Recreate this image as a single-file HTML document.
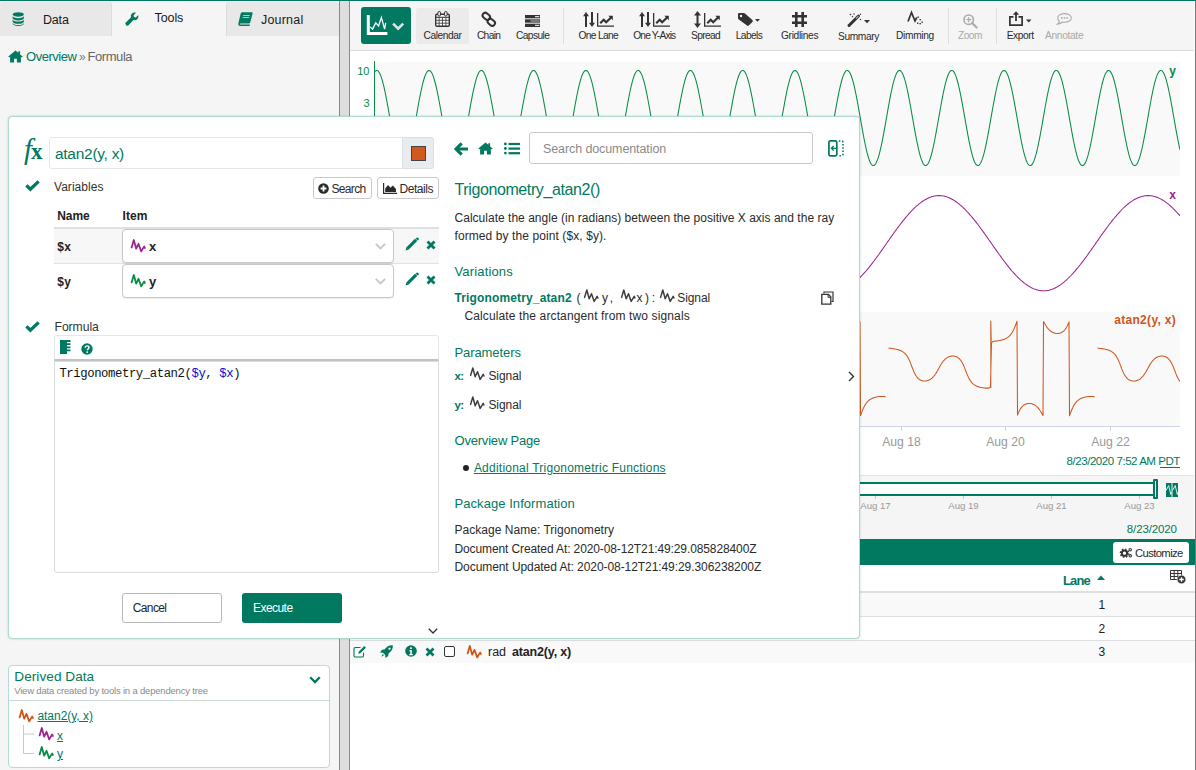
<!DOCTYPE html>
<html lang="en">
<head>
<meta charset="utf-8">
<title>Formula - atan2(y, x)</title>
<style>
*{box-sizing:border-box;margin:0;padding:0}
html,body{width:1196px;height:770px;overflow:hidden;background:#fff}
body{font-family:"Liberation Sans",sans-serif;font-size:12px;color:#2a2a2a;position:relative}
.abs{position:absolute}
.t{position:absolute;white-space:nowrap;line-height:1}
.teal{color:#007960}
svg{position:absolute;overflow:visible}
#topline{left:0;top:0;width:1196px;height:1px;background:#007960}
#left{left:0;top:1px;width:339px;height:769px;background:#f5f5f5}
.tab{position:absolute;top:2px;height:34px;background:#e8e8e8;border-right:1px solid #dadde0;border-radius:3px 3px 0 0}
.tab.on{background:#f5f5f5;border:none}
.tablabel{font-size:13px;color:#1a1a1a;top:12px}
#split{left:339px;top:1px;width:11px;height:769px;background:#dedede;border-left:1px solid #8a8a8a;border-right:1px solid #8a8a8a}
#toolbar{left:350px;top:1px;width:844px;height:50px;background:#f5f5f5;border-bottom:1px solid #dadde0}
#rightedge{left:1195px;top:1px;width:1px;height:769px;background:#777}
.tl{position:absolute;top:29px;font-size:10.5px;line-height:12px;color:#2a2a2a;white-space:nowrap;transform:translateX(-50%)}
.tl.dis{color:#a9a9a9}
.sep{position:absolute;top:8px;width:1px;height:36px;background:#dddddd}
</style>
</head>
<body>
<div class="abs" id="left"></div>
<div class="tab" style="left:0;width:112px"></div>
<div class="tab on" style="left:112px;width:114px"></div>
<div class="tab" style="left:226px;width:113px;border-left:1px solid #dadde0;border-right:none"></div>
<!-- tab icons -->
<svg style="left:11.500px;top:11.500px" width="12.500" height="14" viewBox="0 0 13 15"><g fill="#007960"><ellipse cx="6.5" cy="2.6" rx="6" ry="2.4"/><path d="M.5 4.3c0 1.2 2.7 2.3 6 2.3s6-1.100 6-2.300v2.400c0 1.300-2.700 2.300-6 2.300s-6-1-6-2.300z"/><path d="M.5 8c0 1.200 2.700 2.300 6 2.300s6-1.100 6-2.300v2.400c0 1.300-2.700 2.300-6 2.300s-6-1-6-2.300z"/><path d="M.5 11.700c0 1.200 2.700 2.300 6 2.300s6-1.100 6-2.300v1c0 1.300-2.700 2.300-6 2.300s-6-1-6-2.300z"/></g></svg>
<svg style="left:124.500px;top:11.500px" width="14" height="14" viewBox="0 0 15 15"><path fill="#007960" d="M14.200 3.200l-2.600 2.600-2-.4-.4-2L11.800.800A4.200 4.200 0 0 0 6.300 5.900L.900 11.300a1.600 1.600 0 0 0 0 2.300l.5.500a1.600 1.600 0 0 0 2.300 0l5.400-5.400a4.200 4.200 0 0 0 5.100-5.500z"/></svg>
<svg style="left:238px;top:12px" width="15" height="14" viewBox="0 0 15 14"><path fill="#007960" d="M4.200.3h9.600c.6 0 1 .5.800 1.100l-2.400 9.200c-.1.500-.6.800-1.100.8H2.400c-.4 0-.7.300-.7.600s.3.600.7.600h9.400v.9c0 .200-.2.400-.4.400H2.100C.9 13.900 0 12.900.300 11.700L2.600 1.800C2.800.900 3.400.3 4.200.3zM5.300 3l-.2.800h6.500l.2-.8zm-.5 2-.2.800h6.500l.2-.8z"/></svg>
<!-- breadcrumb -->
<svg style="left:8px;top:50px" width="15" height="13" viewBox="0 0 15 13"><path fill="#007960" d="M7.500.6L.3 6.600l.8.900 1-.8V12.500h4V8.700h2.800v3.800h4V6.700l1 .8.800-.900-2.600-2.200V1.300h-1.800v1.500z"/></svg>

<div class="abs" id="split"></div>
<div class="abs" id="toolbar"></div>
<div class="abs" id="topline"></div>
<div class="abs" id="rightedge"></div>
<!-- toolbar -->
<div class="abs" style="left:361px;top:7px;width:50px;height:37px;background:#007960;border-radius:3px"></div>
<svg style="left:356px;top:4px" width="60" height="44" viewBox="356 4 60 44"><path d="M368.300 14.900V33.400H387.400" fill="none" stroke="#fff" stroke-width="3"/><path d="M370.300 26.900l2.300 2.200 3.100-6.200 2.900 3.100 2.800-8.600 3.200 11.700 1.100-6.200" fill="none" stroke="#fff" stroke-width="1.300" stroke-linejoin="miter"/><path d="M393.100 23.700l5.050 5.050 5.050-5.050" fill="none" stroke="#e2e2e2" stroke-width="2.600"/></svg>
<div class="abs" style="left:416px;top:8px;width:53px;height:36px;background:#ebebeb;border-radius:3px"></div>
<!-- calendar icon -->
<svg style="left:435px;top:11px" width="15" height="16" viewBox="0 0 15 16"><rect x=".7" y="3.200" width="13.600" height="12" rx="1.200" fill="#fdfdfd" stroke="#333" stroke-width="1.400"/><path d="M1 6.300h13" stroke="#333" stroke-width="1.100"/><rect x="2.900" y=".5" width="2.600" height="4.600" rx="1.300" fill="#eee" stroke="#333" stroke-width="1"/><rect x="9.500" y=".5" width="2.600" height="4.600" rx="1.300" fill="#eee" stroke="#333" stroke-width="1"/><path d="M4.100 6.500v8.500M7.500 6.500v8.500M10.900 6.500v8.500M1 9.300h13M1 12.200h13" stroke="#444" stroke-width=".9"/></svg>
<!-- chain icon -->
<svg style="left:481px;top:11px" width="16" height="17" viewBox="0 0 16 17"><g fill="none" stroke="#333" stroke-width="2"><rect x="-4" y="-2.700" width="8" height="5.400" rx="2.700" transform="translate(5.300 5.300) rotate(40)"/><rect x="-4" y="-2.700" width="8" height="5.400" rx="2.700" transform="translate(10.300 11.300) rotate(40)"/></g></svg>
<!-- capsule icon -->
<svg style="left:525px;top:15px" width="15" height="12" viewBox="0 0 15 12"><g fill="#333"><rect x="0" y="0" width="15" height="3.300"/><rect x="0" y="4.350" width="15" height="3.300"/><rect x="0" y="8.700" width="15" height="3.300"/></g><rect x="10" y="1" width="4.300" height="1.200" fill="#ddd"/><rect x="5.500" y="5.400" width="9" height="1.200" fill="#aaa"/><rect x="10" y="9.800" width="4.300" height="1.200" fill="#ddd"/></svg>
<div class="sep" style="left:563px"></div>
<!-- one lane -->
<svg style="left:583px;top:12px" width="31" height="15" viewBox="0 0 31 15"><g fill="#333"><path d="M3 0l3 4.200H4V15H2V4.200H0z"/><path d="M9 15l-3-4.200h2V0h2v10.800h2z"/><path d="M14 1h1.300v12.500H31v1.300H14z"/><path d="M16.500 10.500l4.200-4.200 2.500 2.500 3.600-3.600-1.500-1.500h4.500v4.500l-1.500-1.500-5.100 5.100-2.500-2.500-2.700 2.700z"/></g></svg>
<svg style="left:639px;top:12px" width="31" height="15" viewBox="0 0 31 15"><g fill="#333"><path d="M3 0l3 4.200H4V15H2V4.200H0z"/><path d="M9 15l-3-4.200h2V0h2v10.800h2z"/><path d="M14 1h1.300v12.500H31v1.300H14z"/><path d="M16.500 10.500l4.200-4.200 2.500 2.500 3.600-3.600-1.500-1.500h4.500v4.500l-1.500-1.500-5.100 5.100-2.500-2.500-2.700 2.700z"/></g></svg>
<svg style="left:694px;top:11px" width="27" height="17" viewBox="0 0 27 17"><g fill="#333"><path d="M3.500 0l3.500 4.500H4.500v8H7L3.500 17 0 12.500h2.500v-8H0z"/><path d="M10 2h1.300v12.500H27v1.300H10z"/><path d="M12.500 11.500l4.200-4.200 2.500 2.500 3.600-3.600-1.500-1.500h4.500v4.500l-1.500-1.500-5.100 5.100-2.500-2.500-2.700 2.700z"/></g></svg>
<!-- labels tag -->
<svg style="left:738px;top:13px" width="22" height="13" viewBox="0 0 22 13"><path fill="#333" d="M0 1.200C0 .5.500 0 1.200 0h4.600c.4 0 .9.200 1.200.5l7.400 6.600c.6.500.600 1.300 0 1.900l-3.600 3.600c-.5.500-1.300.5-1.800 0L.5 6.200C.2 5.900 0 5.400 0 5z"/><circle cx="3" cy="3" r="1.200" fill="#f5f5f5"/><path d="M17 6h5l-2.500 2.800z" fill="#333"/></svg>
<!-- gridlines -->
<svg style="left:792px;top:12px" width="15" height="15" viewBox="0 0 15 15"><path d="M4.300 0v15M10.700 0v15M0 4.300h15M0 10.700h15" stroke="#333" stroke-width="2.600" fill="none"/></svg>
<!-- summary wand -->
<svg style="left:848px;top:13px" width="23" height="14" viewBox="0 0 23 14"><path d="M1 12.500L10.500 3" stroke="#333" stroke-width="3" stroke-linecap="round"/><path d="M8 5.500L10.500 3" stroke="#999" stroke-width="1.500"/><g fill="#333"><circle cx="2.500" cy="1.500" r=".8"/><circle cx="6" cy="1" r=".7"/><circle cx="12.500" cy="1.200" r=".7"/><circle cx="12.500" cy="6.500" r=".7"/><circle cx="4.500" cy="3.500" r=".7"/></g><path d="M16 7h6l-3 3.200z" fill="#333"/></svg>
<!-- dimming -->
<svg style="left:907px;top:11px" width="16" height="14" viewBox="0 0 16 14"><path d="M1 10.500L4.500 1.500 8 10l1.800-3.500" fill="none" stroke="#333" stroke-width="1.700" stroke-linejoin="miter"/><g fill="#333"><rect x="10.500" y="5.500" width="1.400" height="1.400"/><rect x="12.500" y="8" width="1.400" height="1.400"/><rect x="14.500" y="10.500" width="1.400" height="1.400"/><rect x="10" y="11.500" width="1.400" height="1.400"/><rect x="12.500" y="12" width="1.400" height="1.400"/></g></svg>
<div class="sep" style="left:948px"></div>
<!-- zoom -->
<svg style="left:963px;top:13.500px" width="14.500" height="14.500" viewBox="0 0 16 16"><circle cx="6.300" cy="6.300" r="5.200" fill="none" stroke="#aaa" stroke-width="1.800"/><path d="M10 10l5 5" stroke="#aaa" stroke-width="2.400" stroke-linecap="round"/><path d="M3.500 6.300h5.600M6.300 3.500v5.600" stroke="#aaa" stroke-width="1.300"/></svg>
<div class="sep" style="left:996px"></div>
<!-- export -->
<svg style="left:1009px;top:11px" width="23" height="15" viewBox="0 0 23 15"><path d="M4.500 5.800H.9v8.300h12.200V5.800H9.500" fill="none" stroke="#333" stroke-width="1.700"/><path d="M7 10V2.500" stroke="#333" stroke-width="1.800"/><path d="M3.800 3.800L7 .3l3.200 3.500z" fill="#333"/><path d="M17 8.500h5.500l-2.750 3z" fill="#333"/></svg>
<!-- annotate -->
<svg style="left:1056px;top:13px" width="16" height="12" viewBox="0 0 16 12"><path d="M8.500.6c3.800 0 6.800 1.900 6.800 4.300s-3 4.300-6.800 4.300c-.7 0-1.400-.1-2-.2C5.300 10 3.600 10.900 1.500 11.200c.9-.8 1.600-1.800 1.800-2.900C2.300 7.500 1.700 6.300 1.700 4.900 1.700 2.500 4.700.6 8.500.6z" fill="none" stroke="#aaa" stroke-width="1.100"/><g fill="#aaa"><circle cx="5.800" cy="4.900" r=".9"/><circle cx="8.500" cy="4.900" r=".9"/><circle cx="11.200" cy="4.900" r=".9"/></g></svg>
<!-- chart -->
<div class="abs" style="left:375px;top:62px;width:805px;height:114px;background:#f9f9f9"></div>
<div class="abs" style="left:375px;top:312px;width:805px;height:114px;background:#f9f9f9"></div>
<svg style="left:0;top:0" width="1196" height="480" viewBox="0 0 1196 480">
<defs><clipPath id="cl"><rect x="375" y="55" width="805" height="372"/></clipPath></defs>
<g clip-path="url(#cl)" fill="none" stroke-width="1.05" stroke-linejoin="round">
<path stroke="#068C45" d="M375.0 71.5L376.0 70.6L377.0 70.4L378.0 70.9L379.0 72.1L380.0 73.9L381.0 76.3L382.0 79.4L383.0 83.0L384.0 87.1L385.0 91.7L386.0 96.7L387.0 101.9L388.0 107.4L389.0 113.0L390.0 118.8L391.0 124.5L392.0 130.1L393.0 135.5L394.0 140.7L395.0 145.5L396.0 150.0L397.0 154.0L398.0 157.5L399.0 160.4L400.0 162.7L401.0 164.3L402.0 165.3L403.0 165.6L404.0 165.2L405.0 164.1L406.0 162.4L407.0 160.0L408.0 157.0L409.0 153.5L410.0 149.4L411.0 144.9L412.0 140.0L413.0 134.8L414.0 129.3L415.0 123.7L416.0 118.0L417.0 112.3L418.0 106.7L419.0 101.2L420.0 96.0L421.0 91.1L422.0 86.6L423.0 82.5L424.0 79.0L425.0 76.0L426.0 73.6L427.0 71.9L428.0 70.8L429.0 70.4L430.0 70.7L431.0 71.7L432.0 73.3L433.0 75.6L434.0 78.5L435.0 82.0L436.0 86.0L437.0 90.4L438.0 95.3L439.0 100.5L440.0 105.9L441.0 111.5L442.0 117.2L443.0 122.9L444.0 128.6L445.0 134.1L446.0 139.3L447.0 144.3L448.0 148.8L449.0 153.0L450.0 156.6L451.0 159.6L452.0 162.1L453.0 163.9L454.0 165.1L455.0 165.6L456.0 165.4L457.0 164.5L458.0 162.9L459.0 160.7L460.0 157.9L461.0 154.5L462.0 150.6L463.0 146.2L464.0 141.4L465.0 136.2L466.0 130.8L467.0 125.3L468.0 119.6L469.0 113.8L470.0 108.2L471.0 102.7L472.0 97.4L473.0 92.4L474.0 87.8L475.0 83.6L476.0 79.9L477.0 76.7L478.0 74.2L479.0 72.3L480.0 71.0L481.0 70.4L482.0 70.5L483.0 71.3L484.0 72.8L485.0 74.9L486.0 77.7L487.0 81.0L488.0 84.9L489.0 89.2L490.0 93.9L491.0 99.0L492.0 104.4L493.0 110.0L494.0 115.7L495.0 121.4L496.0 127.1L497.0 132.6L498.0 137.9L499.0 143.0L500.0 147.6L501.0 151.9L502.0 155.7L503.0 158.9L504.0 161.5L505.0 163.5L506.0 164.9L507.0 165.5L508.0 165.5L509.0 164.8L510.0 163.4L511.0 161.4L512.0 158.7L513.0 155.5L514.0 151.7L515.0 147.4L516.0 142.7L517.0 137.7L518.0 132.3L519.0 126.8L520.0 121.1L521.0 115.4L522.0 109.7L523.0 104.1L524.0 98.8L525.0 93.7L526.0 89.0L527.0 84.7L528.0 80.8L529.0 77.5L530.0 74.8L531.0 72.7L532.0 71.3L533.0 70.5L534.0 70.5L535.0 71.1L536.0 72.4L537.0 74.3L538.0 76.9L539.0 80.0L540.0 83.8L541.0 88.0L542.0 92.6L543.0 97.6L544.0 102.9L545.0 108.5L546.0 114.1L547.0 119.8L548.0 125.5L549.0 131.1L550.0 136.5L551.0 141.6L552.0 146.4L553.0 150.8L554.0 154.7L555.0 158.1L556.0 160.9L557.0 163.0L558.0 164.6L559.0 165.4L560.0 165.6L561.0 165.1L562.0 163.9L563.0 162.0L564.0 159.5L565.0 156.4L566.0 152.8L567.0 148.6L568.0 144.0L569.0 139.1L570.0 133.8L571.0 128.3L572.0 122.6L573.0 116.9L574.0 111.2L575.0 105.6L576.0 100.2L577.0 95.0L578.0 90.2L579.0 85.8L580.0 81.8L581.0 78.4L582.0 75.5L583.0 73.2L584.0 71.6L585.0 70.7L586.0 70.4L587.0 70.8L588.0 71.9L589.0 73.7L590.0 76.1L591.0 79.1L592.0 82.7L593.0 86.8L594.0 91.3L595.0 96.3L596.0 101.5L597.0 107.0L598.0 112.6L599.0 118.3L600.0 124.0L601.0 129.6L602.0 135.1L603.0 140.3L604.0 145.2L605.0 149.7L606.0 153.7L607.0 157.2L608.0 160.2L609.0 162.5L610.0 164.2L611.0 165.2L612.0 165.6L613.0 165.3L614.0 164.3L615.0 162.6L616.0 160.2L617.0 157.3L618.0 153.8L619.0 149.8L620.0 145.3L621.0 140.4L622.0 135.2L623.0 129.8L624.0 124.2L625.0 118.5L626.0 112.8L627.0 107.1L628.0 101.6L629.0 96.4L630.0 91.5L631.0 86.9L632.0 82.8L633.0 79.2L634.0 76.2L635.0 73.8L636.0 72.0L637.0 70.9L638.0 70.4L639.0 70.6L640.0 71.6L641.0 73.2L642.0 75.4L643.0 78.3L644.0 81.7L645.0 85.6L646.0 90.1L647.0 94.9L648.0 100.0L649.0 105.5L650.0 111.1L651.0 116.8L652.0 122.5L653.0 128.1L654.0 133.6L655.0 138.9L656.0 143.9L657.0 148.5L658.0 152.6L659.0 156.3L660.0 159.4L661.0 161.9L662.0 163.8L663.0 165.0L664.0 165.6L665.0 165.4L666.0 164.6L667.0 163.1L668.0 160.9L669.0 158.2L670.0 154.8L671.0 150.9L672.0 146.6L673.0 141.8L674.0 136.7L675.0 131.3L676.0 125.7L677.0 120.0L678.0 114.3L679.0 108.6L680.0 103.1L681.0 97.8L682.0 92.8L683.0 88.1L684.0 83.9L685.0 80.2L686.0 77.0L687.0 74.4L688.0 72.4L689.0 71.1L690.0 70.5L691.0 70.5L692.0 71.3L693.0 72.7L694.0 74.7L695.0 77.4L696.0 80.7L697.0 84.5L698.0 88.8L699.0 93.6L700.0 98.6L701.0 104.0L702.0 109.5L703.0 115.2L704.0 120.9L705.0 126.6L706.0 132.2L707.0 137.5L708.0 142.6L709.0 147.3L710.0 151.6L711.0 155.4L712.0 158.6L713.0 161.3L714.0 163.4L715.0 164.8L716.0 165.5L717.0 165.5L718.0 164.9L719.0 163.6L720.0 161.6L721.0 159.0L722.0 155.8L723.0 152.0L724.0 147.8L725.0 143.1L726.0 138.1L727.0 132.8L728.0 127.2L729.0 121.6L730.0 115.8L731.0 110.2L732.0 104.6L733.0 99.2L734.0 94.1L735.0 89.3L736.0 85.0L737.0 81.1L738.0 77.8L739.0 75.0L740.0 72.9L741.0 71.4L742.0 70.6L743.0 70.4L744.0 71.0L745.0 72.2L746.0 74.1L747.0 76.6L748.0 79.8L749.0 83.4L750.0 87.6L751.0 92.2L752.0 97.2L753.0 102.5L754.0 108.0L755.0 113.7L756.0 119.4L757.0 125.1L758.0 130.7L759.0 136.1L760.0 141.2L761.0 146.1L762.0 150.5L763.0 154.4L764.0 157.8L765.0 160.7L766.0 162.9L767.0 164.5L768.0 165.4L769.0 165.6L770.0 165.1L771.0 164.0L772.0 162.2L773.0 159.7L774.0 156.7L775.0 153.1L776.0 149.0L777.0 144.4L778.0 139.5L779.0 134.2L780.0 128.7L781.0 123.1L782.0 117.4L783.0 111.7L784.0 106.1L785.0 100.6L786.0 95.4L787.0 90.6L788.0 86.1L789.0 82.1L790.0 78.6L791.0 75.7L792.0 73.4L793.0 71.7L794.0 70.7L795.0 70.4L796.0 70.8L797.0 71.8L798.0 73.5L799.0 75.9L800.0 78.9L801.0 82.4L802.0 86.5L803.0 91.0L804.0 95.8L805.0 101.1L806.0 106.5L807.0 112.1L808.0 117.8L809.0 123.6L810.0 129.2L811.0 134.6L812.0 139.9L813.0 144.8L814.0 149.3L815.0 153.4L816.0 156.9L817.0 159.9L818.0 162.3L819.0 164.1L820.0 165.2L821.0 165.6L822.0 165.3L823.0 164.4L824.0 162.7L825.0 160.5L826.0 157.6L827.0 154.1L828.0 150.1L829.0 145.7L830.0 140.8L831.0 135.7L832.0 130.2L833.0 124.6L834.0 118.9L835.0 113.2L836.0 107.6L837.0 102.1L838.0 96.8L839.0 91.9L840.0 87.3L841.0 83.1L842.0 79.5L843.0 76.4L844.0 73.9L845.0 72.1L846.0 70.9L847.0 70.4L848.0 70.6L849.0 71.5L850.0 73.0L851.0 75.2L852.0 78.0L853.0 81.4L854.0 85.3L855.0 89.7L856.0 94.5L857.0 99.6L858.0 105.0L859.0 110.6L860.0 116.3L861.0 122.0L862.0 127.7L863.0 133.2L864.0 138.5L865.0 143.5L866.0 148.1L867.0 152.3L868.0 156.0L869.0 159.2L870.0 161.8L871.0 163.7L872.0 165.0L873.0 165.6L874.0 165.5L875.0 164.7L876.0 163.2L877.0 161.1L878.0 158.4L879.0 155.1L880.0 151.2L881.0 146.9L882.0 142.2L883.0 137.1L884.0 131.7L885.0 126.2L886.0 120.5L887.0 114.8L888.0 109.1L889.0 103.5L890.0 98.2L891.0 93.2L892.0 88.5L893.0 84.2L894.0 80.4L895.0 77.2L896.0 74.6L897.0 72.5L898.0 71.2L899.0 70.5L900.0 70.5L901.0 71.2L902.0 72.5L903.0 74.6L904.0 77.2L905.0 80.4L906.0 84.2L907.0 88.5L908.0 93.2L909.0 98.2L910.0 103.5L911.0 109.1L912.0 114.8L913.0 120.5L914.0 126.2L915.0 131.7L916.0 137.1L917.0 142.2L918.0 146.9L919.0 151.2L920.0 155.1L921.0 158.4L922.0 161.1L923.0 163.2L924.0 164.7L925.0 165.5L926.0 165.6L927.0 165.0L928.0 163.7L929.0 161.8L930.0 159.2L931.0 156.0L932.0 152.3L933.0 148.1L934.0 143.5L935.0 138.5L936.0 133.2L937.0 127.7L938.0 122.0L939.0 116.3L940.0 110.6L941.0 105.0L942.0 99.6L943.0 94.5L944.0 89.7L945.0 85.3L946.0 81.4L947.0 78.0L948.0 75.2L949.0 73.0L950.0 71.5L951.0 70.6L952.0 70.4L953.0 70.9L954.0 72.1L955.0 73.9L956.0 76.4L957.0 79.5L958.0 83.1L959.0 87.3L960.0 91.9L961.0 96.8L962.0 102.1L963.0 107.6L964.0 113.2L965.0 118.9L966.0 124.6L967.0 130.2L968.0 135.7L969.0 140.8L970.0 145.7L971.0 150.1L972.0 154.1L973.0 157.6L974.0 160.5L975.0 162.7L976.0 164.4L977.0 165.3L978.0 165.6L979.0 165.2L980.0 164.1L981.0 162.3L982.0 159.9L983.0 156.9L984.0 153.4L985.0 149.3L986.0 144.8L987.0 139.9L988.0 134.6L989.0 129.2L990.0 123.6L991.0 117.8L992.0 112.1L993.0 106.5L994.0 101.1L995.0 95.8L996.0 91.0L997.0 86.5L998.0 82.4L999.0 78.9L1000.0 75.9L1001.0 73.5L1002.0 71.8L1003.0 70.8L1004.0 70.4L1005.0 70.7L1006.0 71.7L1007.0 73.4L1008.0 75.7L1009.0 78.6L1010.0 82.1L1011.0 86.1L1012.0 90.6L1013.0 95.4L1014.0 100.6L1015.0 106.1L1016.0 111.7L1017.0 117.4L1018.0 123.1L1019.0 128.7L1020.0 134.2L1021.0 139.5L1022.0 144.4L1023.0 149.0L1024.0 153.1L1025.0 156.7L1026.0 159.7L1027.0 162.2L1028.0 164.0L1029.0 165.1L1030.0 165.6L1031.0 165.4L1032.0 164.5L1033.0 162.9L1034.0 160.7L1035.0 157.8L1036.0 154.4L1037.0 150.5L1038.0 146.1L1039.0 141.2L1040.0 136.1L1041.0 130.7L1042.0 125.1L1043.0 119.4L1044.0 113.7L1045.0 108.0L1046.0 102.5L1047.0 97.2L1048.0 92.2L1049.0 87.6L1050.0 83.4L1051.0 79.8L1052.0 76.6L1053.0 74.1L1054.0 72.2L1055.0 71.0L1056.0 70.4L1057.0 70.6L1058.0 71.4L1059.0 72.9L1060.0 75.0L1061.0 77.8L1062.0 81.1L1063.0 85.0L1064.0 89.3L1065.0 94.1L1066.0 99.2L1067.0 104.6L1068.0 110.2L1069.0 115.8L1070.0 121.6L1071.0 127.2L1072.0 132.8L1073.0 138.1L1074.0 143.1L1075.0 147.8L1076.0 152.0L1077.0 155.8L1078.0 159.0L1079.0 161.6L1080.0 163.6L1081.0 164.9L1082.0 165.5L1083.0 165.5L1084.0 164.8L1085.0 163.4L1086.0 161.3L1087.0 158.6L1088.0 155.4L1089.0 151.6L1090.0 147.3L1091.0 142.6L1092.0 137.5L1093.0 132.2L1094.0 126.6L1095.0 120.9L1096.0 115.2L1097.0 109.5L1098.0 104.0L1099.0 98.6L1100.0 93.6L1101.0 88.8L1102.0 84.5L1103.0 80.7L1104.0 77.4L1105.0 74.7L1106.0 72.7L1107.0 71.3L1108.0 70.5L1109.0 70.5L1110.0 71.1L1111.0 72.4L1112.0 74.4L1113.0 77.0L1114.0 80.2L1115.0 83.9L1116.0 88.1L1117.0 92.8L1118.0 97.8L1119.0 103.1L1120.0 108.6L1121.0 114.3L1122.0 120.0L1123.0 125.7L1124.0 131.3L1125.0 136.7L1126.0 141.8L1127.0 146.6L1128.0 150.9L1129.0 154.8L1130.0 158.2L1131.0 160.9L1132.0 163.1L1133.0 164.6L1134.0 165.4L1135.0 165.6L1136.0 165.0L1137.0 163.8L1138.0 161.9L1139.0 159.4L1140.0 156.3L1141.0 152.6L1142.0 148.5L1143.0 143.9L1144.0 138.9L1145.0 133.6L1146.0 128.1L1147.0 122.5L1148.0 116.8L1149.0 111.1L1150.0 105.5L1151.0 100.0L1152.0 94.9L1153.0 90.1L1154.0 85.6L1155.0 81.7L1156.0 78.3L1157.0 75.4L1158.0 73.2L1159.0 71.6L1160.0 70.6L1161.0 70.4L1162.0 70.9L1163.0 72.0L1164.0 73.8L1165.0 76.2L1166.0 79.2L1167.0 82.8L1168.0 86.9L1169.0 91.5L1170.0 96.4L1171.0 101.6L1172.0 107.1L1173.0 112.8L1174.0 118.5L1175.0 124.2L1176.0 129.8L1177.0 135.2L1178.0 140.4L1179.0 145.3L1180.0 149.8"/>
<path stroke="#9D248F" d="M850.0 285.7L851.0 285.0L852.0 284.3L853.0 283.6L854.0 282.8L855.0 282.0L856.0 281.2L857.0 280.3L858.0 279.4L859.0 278.4L860.0 277.5L861.0 276.4L862.0 275.4L863.0 274.3L864.0 273.2L865.0 272.1L866.0 271.0L867.0 269.8L868.0 268.6L869.0 267.4L870.0 266.1L871.0 264.9L872.0 263.6L873.0 262.3L874.0 261.0L875.0 259.6L876.0 258.3L877.0 256.9L878.0 255.5L879.0 254.2L880.0 252.8L881.0 251.4L882.0 249.9L883.0 248.5L884.0 247.1L885.0 245.7L886.0 244.2L887.0 242.8L888.0 241.4L889.0 240.0L890.0 238.5L891.0 237.1L892.0 235.7L893.0 234.3L894.0 232.9L895.0 231.5L896.0 230.1L897.0 228.7L898.0 227.4L899.0 226.0L900.0 224.7L901.0 223.4L902.0 222.1L903.0 220.8L904.0 219.6L905.0 218.4L906.0 217.2L907.0 216.0L908.0 214.8L909.0 213.7L910.0 212.6L911.0 211.5L912.0 210.4L913.0 209.4L914.0 208.4L915.0 207.5L916.0 206.5L917.0 205.6L918.0 204.8L919.0 203.9L920.0 203.2L921.0 202.4L922.0 201.7L923.0 201.0L924.0 200.4L925.0 199.8L926.0 199.2L927.0 198.7L928.0 198.2L929.0 197.7L930.0 197.3L931.0 197.0L932.0 196.6L933.0 196.4L934.0 196.1L935.0 195.9L936.0 195.8L937.0 195.7L938.0 195.6L939.0 195.6L940.0 195.6L941.0 195.7L942.0 195.8L943.0 195.9L944.0 196.1L945.0 196.4L946.0 196.6L947.0 197.0L948.0 197.3L949.0 197.7L950.0 198.2L951.0 198.7L952.0 199.2L953.0 199.8L954.0 200.4L955.0 201.0L956.0 201.7L957.0 202.4L958.0 203.2L959.0 203.9L960.0 204.8L961.0 205.6L962.0 206.5L963.0 207.5L964.0 208.4L965.0 209.4L966.0 210.4L967.0 211.5L968.0 212.6L969.0 213.7L970.0 214.8L971.0 216.0L972.0 217.2L973.0 218.4L974.0 219.6L975.0 220.8L976.0 222.1L977.0 223.4L978.0 224.7L979.0 226.0L980.0 227.4L981.0 228.7L982.0 230.1L983.0 231.5L984.0 232.9L985.0 234.3L986.0 235.7L987.0 237.1L988.0 238.5L989.0 240.0L990.0 241.4L991.0 242.8L992.0 244.2L993.0 245.7L994.0 247.1L995.0 248.5L996.0 249.9L997.0 251.4L998.0 252.8L999.0 254.2L1000.0 255.5L1001.0 256.9L1002.0 258.3L1003.0 259.6L1004.0 261.0L1005.0 262.3L1006.0 263.6L1007.0 264.9L1008.0 266.1L1009.0 267.4L1010.0 268.6L1011.0 269.8L1012.0 271.0L1013.0 272.1L1014.0 273.2L1015.0 274.3L1016.0 275.4L1017.0 276.4L1018.0 277.5L1019.0 278.4L1020.0 279.4L1021.0 280.3L1022.0 281.2L1023.0 282.0L1024.0 282.8L1025.0 283.6L1026.0 284.3L1027.0 285.0L1028.0 285.7L1029.0 286.3L1030.0 286.9L1031.0 287.5L1032.0 288.0L1033.0 288.4L1034.0 288.9L1035.0 289.2L1036.0 289.6L1037.0 289.9L1038.0 290.1L1039.0 290.4L1040.0 290.5L1041.0 290.7L1042.0 290.7L1043.0 290.8L1044.0 290.8L1045.0 290.8L1046.0 290.7L1047.0 290.5L1048.0 290.4L1049.0 290.2L1050.0 289.9L1051.0 289.6L1052.0 289.3L1053.0 288.9L1054.0 288.5L1055.0 288.0L1056.0 287.5L1057.0 287.0L1058.0 286.4L1059.0 285.8L1060.0 285.1L1061.0 284.4L1062.0 283.7L1063.0 282.9L1064.0 282.1L1065.0 281.2L1066.0 280.4L1067.0 279.5L1068.0 278.5L1069.0 277.5L1070.0 276.5L1071.0 275.5L1072.0 274.4L1073.0 273.3L1074.0 272.2L1075.0 271.1L1076.0 269.9L1077.0 268.7L1078.0 267.5L1079.0 266.2L1080.0 265.0L1081.0 263.7L1082.0 262.4L1083.0 261.1L1084.0 259.7L1085.0 258.4L1086.0 257.0L1087.0 255.7L1088.0 254.3L1089.0 252.9L1090.0 251.5L1091.0 250.1L1092.0 248.6L1093.0 247.2L1094.0 245.8L1095.0 244.4L1096.0 242.9L1097.0 241.5L1098.0 240.1L1099.0 238.6L1100.0 237.2L1101.0 235.8L1102.0 234.4L1103.0 233.0L1104.0 231.6L1105.0 230.2L1106.0 228.9L1107.0 227.5L1108.0 226.2L1109.0 224.8L1110.0 223.5L1111.0 222.2L1112.0 220.9L1113.0 219.7L1114.0 218.5L1115.0 217.2L1116.0 216.1L1117.0 214.9L1118.0 213.8L1119.0 212.6L1120.0 211.6L1121.0 210.5L1122.0 209.5L1123.0 208.5L1124.0 207.5L1125.0 206.6L1126.0 205.7L1127.0 204.8L1128.0 204.0L1129.0 203.2L1130.0 202.5L1131.0 201.7L1132.0 201.1L1133.0 200.4L1134.0 199.8L1135.0 199.2L1136.0 198.7L1137.0 198.2L1138.0 197.8L1139.0 197.4L1140.0 197.0L1141.0 196.7L1142.0 196.4L1143.0 196.2L1144.0 196.0L1145.0 195.8L1146.0 195.7L1147.0 195.6L1148.0 195.6L1149.0 195.6L1150.0 195.7L1151.0 195.8L1152.0 195.9L1153.0 196.1L1154.0 196.4L1155.0 196.6L1156.0 196.9L1157.0 197.3L1158.0 197.7L1159.0 198.1L1160.0 198.6L1161.0 199.1L1162.0 199.7L1163.0 200.3L1164.0 200.9L1165.0 201.6L1166.0 202.3L1167.0 203.1L1168.0 203.9L1169.0 204.7L1170.0 205.6L1171.0 206.5L1172.0 207.4L1173.0 208.3L1174.0 209.3L1175.0 210.3L1176.0 211.4L1177.0 212.5L1178.0 213.6L1179.0 214.7L1180.0 215.9"/>
<path stroke="#CE561B" d="M850.0 333.3L850.5 333.2L851.0 333.0L851.5 332.9L852.0 332.7L852.5 332.4L853.0 332.1L853.5 331.8L854.0 331.4L854.5 331.0L855.0 330.5L855.5 330.0L856.0 329.4L856.5 328.7L857.0 328.0L857.5 327.1L858.0 326.2L858.5 325.2L859.0 324.1L859.5 323.0L860.0 321.8L860.5 415.5L861.0 414.2L861.5 412.9L862.0 411.6L862.5 410.3L863.0 409.1L863.5 408.0L864.0 406.9L864.5 406.0L865.0 405.1L865.5 404.3L866.0 403.5L866.5 402.8L867.0 402.2L867.5 401.7L868.0 401.2L868.5 400.7L869.0 400.3L869.5 399.9L870.0 399.5L870.5 399.2L871.0 398.9L871.5 398.7L872.0 398.4L872.5 398.2L873.0 398.0L873.5 397.8L874.0 397.7L874.5 397.5L875.0 397.4L875.5 397.2L876.0 397.1L876.5 397.0L877.0 396.9L877.5 396.8L878.0 396.7L878.5 396.7L879.0 396.6L879.5 396.5L880.0 396.5L880.5 396.4L881.0 396.4L881.5 396.4L882.0 396.4L882.5 396.4L883.0 396.4L883.5 396.4L884.0 396.4L884.5 396.5L885.0 396.7L885.5 397.1M888.5 348.0L889.0 348.1L889.5 348.2L890.0 348.3L890.5 348.3L891.0 348.4L891.5 348.4L892.0 348.5L892.5 348.6L893.0 348.7L893.5 348.7L894.0 348.8L894.5 348.9L895.0 349.0L895.5 349.1L896.0 349.2L896.5 349.3L897.0 349.4L897.5 349.5L898.0 349.7L898.5 349.8L899.0 350.0L899.5 350.2L900.0 350.4L900.5 350.6L901.0 350.8L901.5 351.0L902.0 351.3L902.5 351.6L903.0 351.9L903.5 352.3L904.0 352.7L904.5 353.1L905.0 353.6L905.5 354.1L906.0 354.7L906.5 355.3L907.0 356.0L907.5 356.8L908.0 357.6L908.5 358.6L909.0 359.6L909.5 360.7L910.0 361.8L910.5 363.1L911.0 364.4L911.5 365.7L912.0 367.0L912.5 368.3L913.0 369.6L913.5 370.8L914.0 372.0L914.5 373.1L915.0 374.0L915.5 374.9L916.0 375.8L916.5 376.5L917.0 377.1L917.5 377.7L918.0 378.3L918.5 378.7L919.0 379.1L919.5 379.5L920.0 379.8L920.5 380.1L921.0 380.3L921.5 380.5L922.0 380.7L922.5 380.8L923.0 380.9L923.5 381.0L924.0 381.0L924.5 381.0L925.0 381.0L925.5 381.0L926.0 381.0L926.5 380.9L927.0 380.8L927.5 380.6L928.0 380.5L928.5 380.3L929.0 380.1L929.5 379.8L930.0 379.6L930.5 379.3L931.0 378.9L931.5 378.5L932.0 378.1L932.5 377.6L933.0 377.1L933.5 376.6L934.0 376.0L934.5 375.4L935.0 374.7L935.5 374.0L936.0 373.2L936.5 372.4L937.0 371.5L937.5 370.7L938.0 369.8L938.5 368.9L939.0 368.0L939.5 367.1L940.0 366.2L940.5 365.3L941.0 364.5L941.5 363.7L942.0 362.9L942.5 362.2L943.0 361.5L943.5 360.9L944.0 360.3L944.5 359.8L945.0 359.3L945.5 358.8L946.0 358.4L946.5 358.1L947.0 357.7L947.5 357.4L948.0 357.1L948.5 356.9L949.0 356.7L949.5 356.5L950.0 356.4L950.5 356.3L951.0 356.2L951.5 356.1L952.0 356.0L952.5 356.0L953.0 356.0L953.5 356.0L954.0 356.1L954.5 356.2L955.0 356.3L955.5 356.4L956.0 356.6L956.5 356.8L957.0 357.1L957.5 357.3L958.0 357.7L958.5 358.0L959.0 358.5L959.5 358.9L960.0 359.5L960.5 360.1L961.0 360.7L961.5 361.5L962.0 362.3L962.5 363.2L963.0 364.2L963.5 365.3L964.0 366.4L964.5 367.6L965.0 368.9L965.5 370.2L966.0 371.5L966.5 372.8L967.0 374.1L967.5 375.3L968.0 376.4L968.5 377.5L969.0 378.5L969.5 379.4L970.0 380.2L970.5 380.9L971.0 381.6L971.5 382.2L972.0 382.8L972.5 383.3L973.0 383.8L973.5 384.2L974.0 384.6L974.5 384.9L975.0 385.2L975.5 385.5L976.0 385.8L976.5 386.0L977.0 386.3L977.5 386.5L978.0 386.6L978.5 386.8L979.0 387.0L979.5 387.1L980.0 387.3L980.5 387.4L981.0 387.5L981.5 387.6L982.0 387.7L982.5 387.8L983.0 387.8L983.5 387.9L984.0 388.0L984.5 388.0L985.0 388.1L985.5 388.1L986.0 388.1L986.5 388.1L987.0 388.1L987.5 388.1L988.0 388.1L988.5 388.1L989.0 388.0L989.5 387.8L990.0 387.5L990.5 386.4L991.0 362.7L991.5 343.1L992.0 342.1L992.5 341.7L993.0 341.5L993.5 341.4L994.0 341.3L994.5 341.3L995.0 341.2L995.5 341.1L996.0 341.1L996.5 341.0L997.0 340.9L997.5 340.9L998.0 340.8L998.5 340.7L999.0 340.6L999.5 340.5L1000.0 340.4L1000.5 340.3L1001.0 340.2L1001.5 340.1L1002.0 340.0L1002.5 339.8L1003.0 339.7L1003.5 339.5L1004.0 339.3L1004.5 339.2L1005.0 338.9L1005.5 338.7L1006.0 338.5L1006.5 338.2L1007.0 337.9L1007.5 337.6L1008.0 337.2L1008.5 336.9L1009.0 336.4L1009.5 336.0L1010.0 335.4L1010.5 334.9L1011.0 334.2L1011.5 333.5L1012.0 332.8L1012.5 331.9L1013.0 331.0L1013.5 330.0L1014.0 328.9L1014.5 327.8L1015.0 326.5L1015.5 325.2L1016.0 323.9L1016.5 322.6L1017.0 321.3L1017.5 415.0L1018.0 413.8L1018.5 412.6L1019.0 411.5L1019.5 410.5L1020.0 409.6L1020.5 408.8L1021.0 408.1L1021.5 407.4L1022.0 406.8L1022.5 406.3L1023.0 405.8L1023.5 405.4L1024.0 405.0L1024.5 404.7L1025.0 404.5L1025.5 404.2L1026.0 404.0L1026.5 403.9L1027.0 403.7L1027.5 403.6L1028.0 403.5L1028.5 403.5L1029.0 403.5L1029.5 403.5L1030.0 403.5L1030.5 403.5L1031.0 403.6L1031.5 403.7L1032.0 403.8L1032.5 404.0L1033.0 404.2L1033.5 404.4L1034.0 404.6L1034.5 404.9L1035.0 405.2L1035.5 405.6L1036.0 405.9L1036.5 406.4L1037.0 406.8L1037.5 407.3L1038.0 407.9L1038.5 408.4L1039.0 409.1L1039.5 409.8L1040.0 410.5L1040.5 411.2L1041.0 412.1L1041.5 412.9L1042.0 413.8L1042.5 414.7L1043.0 415.6L1043.5 321.5L1044.0 322.4L1044.5 323.3L1045.0 324.1L1045.5 325.0L1046.0 325.8L1046.5 326.5L1047.0 327.3L1047.5 327.9L1048.0 328.6L1048.5 329.1L1049.0 329.7L1049.5 330.2L1050.0 330.6L1050.5 331.0L1051.0 331.4L1051.5 331.8L1052.0 332.1L1052.5 332.3L1053.0 332.6L1053.5 332.8L1054.0 333.0L1054.5 333.1L1055.0 333.2L1055.5 333.3L1056.0 333.4L1056.5 333.5L1057.0 333.5L1057.5 333.5L1058.0 333.5L1058.5 333.4L1059.0 333.3L1059.5 333.2L1060.0 333.1L1060.5 332.9L1061.0 332.7L1061.5 332.5L1062.0 332.2L1062.5 331.9L1063.0 331.5L1063.5 331.1L1064.0 330.6L1064.5 330.1L1065.0 329.5L1065.5 328.8L1066.0 328.1L1066.5 327.3L1067.0 326.4L1067.5 325.4L1068.0 324.3L1068.5 323.2L1069.0 321.9L1069.5 415.7L1070.0 414.4L1070.5 413.1L1071.0 411.8L1071.5 410.5L1072.0 409.3L1072.5 408.2L1073.0 407.1L1073.5 406.1L1074.0 405.2L1074.5 404.4L1075.0 403.6L1075.5 402.9L1076.0 402.3L1076.5 401.7L1077.0 401.2L1077.5 400.8L1078.0 400.3L1078.5 400.0L1079.0 399.6L1079.5 399.3L1080.0 399.0L1080.5 398.7L1081.0 398.5L1081.5 398.3L1082.0 398.1L1082.5 397.9L1083.0 397.7L1083.5 397.5L1084.0 397.4L1084.5 397.3L1085.0 397.1L1085.5 397.0L1086.0 396.9L1086.5 396.8L1087.0 396.7L1087.5 396.7L1088.0 396.6L1088.5 396.5L1089.0 396.5L1089.5 396.4L1090.0 396.4L1090.5 396.4L1091.0 396.4L1091.5 396.4L1092.0 396.4L1092.5 396.4L1093.0 396.4L1093.5 396.5L1094.0 396.7L1094.5 397.0M1097.5 347.9L1098.0 348.1L1098.5 348.2L1099.0 348.2L1099.5 348.3L1100.0 348.4L1100.5 348.4L1101.0 348.5L1101.5 348.6L1102.0 348.6L1102.5 348.7L1103.0 348.8L1103.5 348.9L1104.0 349.0L1104.5 349.1L1105.0 349.2L1105.5 349.3L1106.0 349.4L1106.5 349.5L1107.0 349.7L1107.5 349.8L1108.0 350.0L1108.5 350.1L1109.0 350.3L1109.5 350.5L1110.0 350.8L1110.5 351.0L1111.0 351.3L1111.5 351.6L1112.0 351.9L1112.5 352.2L1113.0 352.6L1113.5 353.0L1114.0 353.5L1114.5 354.0L1115.0 354.6L1115.5 355.2L1116.0 355.9L1116.5 356.7L1117.0 357.5L1117.5 358.4L1118.0 359.4L1118.5 360.5L1119.0 361.6L1119.5 362.9L1120.0 364.1L1120.5 365.5L1121.0 366.8L1121.5 368.1L1122.0 369.4L1122.5 370.6L1123.0 371.8L1123.5 372.9L1124.0 373.9L1124.5 374.8L1125.0 375.6L1125.5 376.4L1126.0 377.0L1126.5 377.6L1127.0 378.2L1127.5 378.6L1128.0 379.1L1128.5 379.4L1129.0 379.7L1129.5 380.0L1130.0 380.3L1130.5 380.5L1131.0 380.6L1131.5 380.8L1132.0 380.9L1132.5 381.0L1133.0 381.0L1133.5 381.0L1134.0 381.0L1134.5 381.0L1135.0 381.0L1135.5 380.9L1136.0 380.8L1136.5 380.7L1137.0 380.5L1137.5 380.3L1138.0 380.1L1138.5 379.9L1139.0 379.6L1139.5 379.3L1140.0 379.0L1140.5 378.6L1141.0 378.2L1141.5 377.7L1142.0 377.2L1142.5 376.7L1143.0 376.1L1143.5 375.5L1144.0 374.8L1144.5 374.1L1145.0 373.3L1145.5 372.5L1146.0 371.7L1146.5 370.8L1147.0 369.9L1147.5 369.0L1148.0 368.1L1148.5 367.2L1149.0 366.3L1149.5 365.4L1150.0 364.6L1150.5 363.8L1151.0 363.0L1151.5 362.3L1152.0 361.6L1152.5 361.0L1153.0 360.4L1153.5 359.9L1154.0 359.4L1154.5 358.9L1155.0 358.5L1155.5 358.1L1156.0 357.8L1156.5 357.5L1157.0 357.2L1157.5 356.9L1158.0 356.7L1158.5 356.6L1159.0 356.4L1159.5 356.3L1160.0 356.2L1160.5 356.1L1161.0 356.0L1161.5 356.0L1162.0 356.0L1162.5 356.0L1163.0 356.1L1163.5 356.2L1164.0 356.3L1164.5 356.4L1165.0 356.6L1165.5 356.8L1166.0 357.0L1166.5 357.3L1167.0 357.6L1167.5 358.0L1168.0 358.4L1168.5 358.9L1169.0 359.4L1169.5 360.0L1170.0 360.6L1170.5 361.4L1171.0 362.2L1171.5 363.1L1172.0 364.0L1172.5 365.1L1173.0 366.2L1173.5 367.5L1174.0 368.7L1174.5 370.0L1175.0 371.3L1175.5 372.6L1176.0 373.9L1176.5 375.1L1177.0 376.2L1177.5 377.3L1178.0 378.3L1178.5 379.2L1179.0 380.1L1179.5 380.8L1180.0 381.5M990.8 388L990.8 321L991.2 341"/>
</g>
<path d="M374.5 61V180" stroke="#068C45" stroke-width="1"/>
<path d="M375 426.500H1180M901.500 426v5M1005.500 426v5M1110.500 426v5" stroke="#ccd6eb" stroke-width="1" fill="none"/>
<g font-family="Liberation Sans, sans-serif">
<text x="369.500" y="75" font-size="11" fill="#068C45" text-anchor="end">10</text>
<text x="369.500" y="107" font-size="11" fill="#068C45" text-anchor="end">3</text>
<text x="1176" y="75" font-size="12" font-weight="bold" fill="#068C45" text-anchor="end">y</text>
<text x="1176" y="199" font-size="12" font-weight="bold" fill="#9D248F" text-anchor="end">x</text>
<text x="1176" y="324" font-size="12" font-weight="bold" fill="#CE561B" text-anchor="end" letter-spacing=".3">atan2(y, x)</text>
<text x="901.500" y="446" font-size="12.2" fill="#999" text-anchor="middle">Aug 18</text>
<text x="1005.500" y="446" font-size="12.2" fill="#999" text-anchor="middle">Aug 20</text>
<text x="1110.500" y="446" font-size="12.2" fill="#999" text-anchor="middle">Aug 22</text>
</g>
</svg>
<!-- time + slider -->
<div class="abs" style="left:350px;top:475px;width:844px;height:65px;background:#f5f5f5;border-top:1px solid #e3e3e3"></div>
<div class="abs" style="left:380px;top:482px;width:777px;height:14px;background:#fff;border:2px solid #007960"></div>
<div class="abs" style="left:1153px;top:479px;width:5px;height:20px;background:#fff;border:2px solid #007960;border-radius:1px"></div>
<svg style="left:1166px;top:483px" width="12" height="14" viewBox="0 0 12 14"><rect x="0" y="0" width="5.500" height="14" fill="#007960"/><rect x="6.500" y="0" width="5.500" height="14" fill="#007960"/><path d="M0 7.500L2.700 2.500 4.800 11.500 5.500 9M6.500 7.500L9.200 2.500 11.300 11.500 12 9" fill="none" stroke="#d9f0ea" stroke-width="1"/></svg>
<svg style="left:850px;top:496px" width="330" height="20" viewBox="0 0 330 20"><path d="M25.500 0v3M113.500 0v3M201.500 0v3M289.500 0v3" stroke="#c8c8c8"/><g font-family="Liberation Sans, sans-serif" font-size="9.600" fill="#999" text-anchor="middle"><text x="25.500" y="13">Aug 17</text><text x="113.500" y="13">Aug 19</text><text x="201.500" y="13">Aug 21</text><text x="289.500" y="13">Aug 23</text></g></svg>
<!-- teal bar -->
<div class="abs" style="left:350px;top:539px;width:845px;height:26px;background:#007960"></div>
<div class="abs" style="left:1113px;top:542px;width:76px;height:21px;background:#fff;border-radius:3px"></div>
<svg style="left:1119.500px;top:547px" width="12.500" height="11.500" viewBox="0 0 14 13"><g fill="none" stroke="#333"><circle cx="5" cy="7" r="3" stroke-width="2.200"/><circle cx="5" cy="7" r="4.600" stroke-width="1.600" stroke-dasharray="1.800 1.800"/><circle cx="11.500" cy="3" r="1.400" stroke-width="1.200"/><circle cx="11.500" cy="10" r="1.400" stroke-width="1.200"/></g></svg>
<!-- table -->
<div class="abs" style="left:350px;top:565px;width:845px;height:28px;background:#fff;border-bottom:2px solid #dcdfe3"></div>
<svg style="left:1097px;top:575px" width="8" height="5" viewBox="0 0 8 5"><path d="M0 5l4-4.500L8 5z" fill="#007960"/></svg>
<svg style="left:1170px;top:570px" width="16" height="14" viewBox="0 0 16 14"><path d="M.5.500h11v9H.5zM.5 3.500h11M.5 6.500h11M4.200.5v9M7.800.5v9" fill="none" stroke="#333" stroke-width="1"/><circle cx="11.500" cy="9.500" r="4.300" fill="#333" stroke="#fff" stroke-width=".6"/><path d="M9.200 9.500h4.600M11.500 7.200v4.600" stroke="#fff" stroke-width="1.400"/></svg>
<div class="abs" style="left:350px;top:593px;width:845px;height:24px;background:#f9f9f9;border-bottom:1px solid #dcdfe3"></div>
<div class="abs" style="left:350px;top:617px;width:845px;height:24px;background:#fff;border-bottom:1px solid #dcdfe3"></div>
<div class="abs" style="left:350px;top:641px;width:845px;height:22px;background:#f9f9f9"></div>
<!-- row 3 left -->
<svg style="left:353px;top:645px" width="14" height="13" viewBox="0 0 14 13"><path d="M10.500 7.500v3.200c0 .7-.6 1.300-1.300 1.300H2.300C1.600 12 1 11.400 1 10.700V3.800c0-.7.6-1.300 1.300-1.300h5.200" fill="none" stroke="#007960" stroke-width="1.100"/><path d="M5.300 8.700l.4-2L11.300 1.100l1.600 1.600-5.600 5.600z" fill="#007960"/></svg>
<svg style="left:380px;top:645px" width="13" height="13" viewBox="0 0 13 13"><path fill="#007960" d="M12.800.2c.3 3.500-1 6-4.300 8.300l-.3 2.500-2.700 2-.3-3-2.200-2.200-3-.3 2-2.700 2.500-.3C6.800 1.200 9.300-.1 12.800.2zM9.500 2.500a1.100 1.100 0 1 0 .01 0zM2.800 9l1.200 1.200-2.800 1.600z"/></svg>
<svg style="left:405px;top:645px" width="12" height="12" viewBox="0 0 12 12"><circle cx="6" cy="6" r="5.800" fill="#007960"/><path d="M4.500 5h2.300v4h1v1.200H4.300V9h1V6.200h-.8zM5.200 2.200h1.600v1.700H5.200z" fill="#fff"/></svg>
<svg style="left:425px;top:647px" width="10" height="10" viewBox="0 0 10 10"><path d="M1.500 1.500l7 7M8.500 1.500l-7 7" stroke="#007960" stroke-width="2.600"/></svg>
<div class="abs" style="left:444px;top:646px;width:11px;height:11px;background:#fff;border:1px solid #333;border-radius:2px"></div>
<svg style="left:467px;top:644.5px" width="14.5" height="13" viewBox="0 0 14.500 13"><path d="M.6 8.400L2.800 1l2.400 8.700 2.300-4.900 2.700 7.600 3-5 .7 1.600" fill="none" stroke="#CE561B" stroke-width="1.8" stroke-linejoin="round" stroke-linecap="round"/></svg>

<div class="t" style="left:1066.6px;top:455.97px;font-size:11.5px;color:#007960;letter-spacing:-0.45px">8/23/2020 7:52 AM PDT</div>
<div class="abs" style="left:1160px;top:467px;width:20px;height:1px;background:#007960"></div>
<div class="t" style="left:1126.8px;top:523.87px;font-size:11.5px;color:#007960;letter-spacing:-0.13px">8/23/2020</div>
<div class="t" style="left:1135px;top:548.43px;font-size:11.3px;color:#2a2a2a;letter-spacing:-0.63px">Customize</div>
<div class="t" style="left:1063px;top:573.9px;font-size:13px;color:#007960;font-weight:bold;letter-spacing:-0.84px">Lane</div>
<div class="t" style="left:1098.5px;top:599.24px;font-size:12px;color:#222">1</div>
<div class="t" style="left:1098.5px;top:623.24px;font-size:12px;color:#222">2</div>
<div class="t" style="left:1098.5px;top:646.24px;font-size:12px;color:#222">3</div>
<div class="t" style="left:488px;top:646.32px;font-size:12.5px;color:#222;letter-spacing:-0.02px">rad</div>
<div class="t" style="left:512px;top:646.32px;font-size:12.5px;color:#222;font-weight:bold;letter-spacing:-0.17px">atan2(y, x)</div>
<div class="t" style="left:43px;top:13.52px;font-size:12.5px;color:#1a1a1a;letter-spacing:-0.18px">Data</div>
<div class="t" style="left:154.5px;top:12.42px;font-size:12.5px;color:#1a1a1a;letter-spacing:-0.08px">Tools</div>
<div class="t" style="left:261px;top:13.52px;font-size:12.5px;color:#1a1a1a;letter-spacing:0.2px">Journal</div>
<div class="t" style="left:26px;top:50.4px;font-size:13px;color:#007960;letter-spacing:-0.48px">Overview</div>
<div class="t" style="left:79px;top:51.24px;font-size:12px;color:#7a7a7a;letter-spacing:-1.17px">»</div>
<div class="t" style="left:87.6px;top:50.4px;font-size:13px;color:#666;letter-spacing:-0.45px">Formula</div>
<div class="t" style="left:423.5px;top:30.77px;font-size:10.2px;color:#2a2a2a;letter-spacing:-0.41px">Calendar</div>
<div class="t" style="left:476.9px;top:30.77px;font-size:10.2px;color:#2a2a2a;letter-spacing:-0.63px">Chain</div>
<div class="t" style="left:515.9px;top:30.77px;font-size:10.2px;color:#2a2a2a;letter-spacing:-0.56px">Capsule</div>
<div class="t" style="left:578.4px;top:30.77px;font-size:10.2px;color:#2a2a2a;letter-spacing:-0.65px">One Lane</div>
<div class="t" style="left:633.2px;top:30.77px;font-size:10.2px;color:#2a2a2a;letter-spacing:-0.82px">One Y-Axis</div>
<div class="t" style="left:691px;top:30.77px;font-size:10.2px;color:#2a2a2a;letter-spacing:-0.65px">Spread</div>
<div class="t" style="left:735.7px;top:30.77px;font-size:10.2px;color:#2a2a2a;letter-spacing:-0.56px">Labels</div>
<div class="t" style="left:781px;top:31.07px;font-size:10.2px;color:#2a2a2a;letter-spacing:-0.34px">Gridlines</div>
<div class="t" style="left:838px;top:32.17px;font-size:10.2px;color:#2a2a2a;letter-spacing:-0.38px">Summary</div>
<div class="t" style="left:896px;top:30.77px;font-size:10.2px;color:#2a2a2a;letter-spacing:-0.32px">Dimming</div>
<div class="t" style="left:958px;top:30.77px;font-size:10.2px;color:#a9a9a9;letter-spacing:-0.52px">Zoom</div>
<div class="t" style="left:1006.7px;top:30.77px;font-size:10.2px;color:#2a2a2a;letter-spacing:-0.4px">Export</div>
<div class="t" style="left:1045px;top:30.77px;font-size:10.2px;color:#a9a9a9;letter-spacing:-0.32px">Annotate</div>
<div class="abs" style="left:8px;top:116px;width:852px;height:523px;background:#fff;border:1px solid #b0d8cf;border-radius:4px;box-shadow:0 0 2px rgba(0,121,96,.3)"></div>
<div class="t" style="left:24px;top:135px;font-family:'Liberation Serif',serif;font-size:24px;color:#007960;letter-spacing:-1px"><i style="font-size:29px">f</i><span style="font-size:23px;font-weight:bold;letter-spacing:0">x</span></div>
<div class="abs" style="left:49px;top:137px;width:385px;height:32px;background:#fff;border:1px solid #e4e7ea;border-radius:3px"></div>
<div class="abs" style="left:402px;top:137px;width:32px;height:32px;background:#e9ecef;border:1px solid #dcdfe3;border-radius:0 3px 3px 0"></div>
<div class="abs" style="left:411px;top:146px;width:15px;height:15px;background:#d2581c;border:1px solid #444"></div>
<div class="t" style="left:55px;top:145.78px;font-size:15.5px;color:#007960;letter-spacing:-0.28px">atan2(y, x)</div>
<svg style="left:25px;top:180px" width="15" height="11" viewBox="0 0 15 11"><path d="M1.400 5.400l4 3.900L13.600 1.400" fill="none" stroke="#007960" stroke-width="3.300"/></svg>
<div class="t" style="left:54px;top:181.24px;font-size:12px;color:#333;letter-spacing:0.04px">Variables</div>
<div class="abs" style="left:313px;top:177px;width:59px;height:22px;background:#fff;border:1px solid #c9c9c9;border-radius:3px"></div>
<svg style="left:318px;top:183px" width="11" height="11" viewBox="0 0 11 11"><circle cx="5.500" cy="5.500" r="5.300" fill="#2a2a2a"/><path d="M2.600 5.500h5.800M5.500 2.600v5.800" stroke="#fff" stroke-width="1.800"/></svg>
<div class="t" style="left:331.5px;top:182.74px;font-size:12px;color:#2a2a2a;letter-spacing:-0.67px">Search</div>
<div class="abs" style="left:377px;top:177px;width:62px;height:22px;background:#fff;border:1px solid #c9c9c9;border-radius:3px"></div>
<svg style="left:382.500px;top:183px" width="14" height="11" viewBox="0 0 14 11"><path d="M.6 0v10.400H14" fill="none" stroke="#2a2a2a" stroke-width="1.200"/><path d="M2.200 9V5.500L5 2l2.500 2.800L9.800 2.500 13 6v3z" fill="#2a2a2a"/></svg>
<div class="t" style="left:399.5px;top:182.74px;font-size:12px;color:#2a2a2a;letter-spacing:-0.45px">Details</div>
<div class="t" style="left:57.3px;top:209.84px;font-size:12px;color:#222;font-weight:bold;letter-spacing:-0.12px">Name</div>
<div class="t" style="left:122.5px;top:209.84px;font-size:12px;color:#222;font-weight:bold;letter-spacing:0.08px">Item</div>
<div class="abs" style="left:54px;top:227px;width:385px;height:2px;background:#dcdfe3"></div>
<div class="abs" style="left:54px;top:229px;width:385px;height:35px;background:#f7f7f7;border-bottom:1px solid #dfe2e5"></div>
<div class="abs" style="left:122px;top:229px;width:272px;height:34px;background:#fff;border:1px solid #c8c8c8;border-radius:4px;box-shadow:0 1px 1px rgba(0,0,0,.08)"></div>
<div class="t" style="left:57.3px;top:240.54px;font-size:12px;color:#222;font-weight:bold;letter-spacing:0.33px">$x</div>
<svg style="left:131px;top:239px" width="14.5" height="13" viewBox="0 0 14.500 13"><path d="M.6 8.400L2.800 1l2.400 8.700 2.300-4.900 2.700 7.600 3-5 .7 1.600" fill="none" stroke="#9D248F" stroke-width="1.8" stroke-linejoin="round" stroke-linecap="round"/></svg>
<div class="t" style="left:149px;top:240.4px;font-size:13px;color:#222;font-weight:bold">x</div>
<svg style="left:375px;top:243px" width="11" height="7" viewBox="0 0 11 7"><path d="M.8.800l4.700 4.700L10.200.8" fill="none" stroke="#c8c8c8" stroke-width="1.900"/></svg>
<svg style="left:404.500px;top:237px" width="14" height="14" viewBox="0 0 14 14"><path d="M2.600 11.400L11.300 2.700" stroke="#007960" stroke-width="3.100"/><path d="M.6 13.400l.8-3.300 2.500 2.500z" fill="#007960"/><circle cx="12.300" cy="1.900" r="1.500" fill="#007960"/><path d="M10.300 1.600l2.200 2.200" stroke="#fff" stroke-width=".7"/></svg>
<svg style="left:426px;top:240px" width="10" height="10" viewBox="0 0 10 10"><path d="M1.500 1.500l7 7M8.500 1.500l-7 7" stroke="#007960" stroke-width="2.800"/></svg>
<div class="abs" style="left:122px;top:264px;width:272px;height:34px;background:#fff;border:1px solid #c8c8c8;border-radius:4px;box-shadow:0 1px 1px rgba(0,0,0,.08)"></div>
<div class="t" style="left:57.3px;top:275.54px;font-size:12px;color:#222;font-weight:bold;letter-spacing:0.33px">$y</div>
<svg style="left:131px;top:274px" width="14.5" height="13" viewBox="0 0 14.500 13"><path d="M.6 8.400L2.800 1l2.400 8.700 2.300-4.900 2.700 7.600 3-5 .7 1.600" fill="none" stroke="#068C45" stroke-width="1.8" stroke-linejoin="round" stroke-linecap="round"/></svg>
<div class="t" style="left:149px;top:275.4px;font-size:13px;color:#222;font-weight:bold">y</div>
<svg style="left:375px;top:278px" width="11" height="7" viewBox="0 0 11 7"><path d="M.8.800l4.700 4.700L10.200.8" fill="none" stroke="#c8c8c8" stroke-width="1.900"/></svg>
<svg style="left:404.500px;top:272px" width="14" height="14" viewBox="0 0 14 14"><path d="M2.600 11.400L11.300 2.700" stroke="#007960" stroke-width="3.100"/><path d="M.6 13.400l.8-3.300 2.500 2.500z" fill="#007960"/><circle cx="12.300" cy="1.900" r="1.500" fill="#007960"/><path d="M10.300 1.600l2.200 2.200" stroke="#fff" stroke-width=".7"/></svg>
<svg style="left:426px;top:275px" width="10" height="10" viewBox="0 0 10 10"><path d="M1.500 1.500l7 7M8.500 1.500l-7 7" stroke="#007960" stroke-width="2.800"/></svg>
<svg style="left:25px;top:320.5px" width="15" height="11" viewBox="0 0 15 11"><path d="M1.400 5.400l4 3.900L13.600 1.400" fill="none" stroke="#007960" stroke-width="3.300"/></svg>
<div class="t" style="left:54.5px;top:320.87px;font-size:12.2px;color:#333;letter-spacing:-0.06px">Formula</div>
<div class="abs" style="left:54px;top:335px;width:385px;height:26px;background:#fff;border:1px solid #e6e6e6;border-bottom:2px solid #c2c2c2;border-radius:3px 3px 0 0"></div>
<svg style="left:60px;top:340px" width="11" height="14" viewBox="0 0 11 14"><path d="M0 0h10.500v2H7v1.300h3.500v1.800H7v1.300h3.500v1.800H7v1.300h3.500v1.800H7V14H0z" fill="#007960"/></svg>
<svg style="left:81px;top:343px" width="12" height="12" viewBox="0 0 12 12"><circle cx="6" cy="6" r="5.700" fill="#007960"/><path d="M4.200 4.700c0-1.100.8-1.800 1.900-1.800s1.900.7 1.900 1.600c0 1.400-1.700 1.300-1.700 2.700" fill="none" stroke="#fff" stroke-width="1.400"/><circle cx="6.200" cy="9.100" r=".9" fill="#fff"/></svg>
<div class="abs" style="left:54px;top:361px;width:385px;height:212px;background:#fff;border:1px solid #dcdcdc;border-radius:0 0 3px 3px"></div>
<div class="t" style="left:59.400px;top:368.300px;font-family:'Liberation Mono',monospace;font-size:12.300px;letter-spacing:-.43px;color:#111">Trigonometry_atan2(<span style="color:#0a0acc">$y</span>, <span style="color:#0a0acc">$x</span>)</div>
<div class="abs" style="left:122px;top:593px;width:100px;height:30px;background:#fff;border:1px solid #b9b9b9;border-radius:3px"></div>
<div class="t" style="left:132.8px;top:602.24px;font-size:12px;color:#222;letter-spacing:-0.64px">Cancel</div>
<div class="abs" style="left:242px;top:593px;width:100px;height:30px;background:#007960;border-radius:3px"></div>
<div class="t" style="left:253px;top:602.24px;font-size:12px;color:#fff;letter-spacing:-0.55px">Execute</div>
<svg style="left:428px;top:628px" width="10" height="7" viewBox="0 0 10 7"><path d="M.8.800l4.200 4.200L9.200.8" fill="none" stroke="#333" stroke-width="1.300"/></svg>
<svg style="left:454px;top:142px" width="15" height="14" viewBox="0 0 15 14"><path d="M14 7H3M7.700 1.300L2 7l5.700 5.700" fill="none" stroke="#007960" stroke-width="3.100"/></svg>
<svg style="left:478px;top:142px" width="15" height="13" viewBox="0 0 15 13"><path fill="#007960" d="M7.500.6L.3 6.600l.8.900 1-.8V12.500h4V8.700h2.800v3.800h4V6.700l1 .8.800-.900-2.600-2.200V1.300h-1.800v1.500z"/></svg>
<svg style="left:503.500px;top:142px" width="16" height="13" viewBox="0 0 16 13"><g fill="#007960"><rect x="0" y=".5" width="2.800" height="2.800" rx="1.400"/><rect x="0" y="5.100" width="2.800" height="2.800" rx="1.400"/><rect x="0" y="9.700" width="2.800" height="2.800" rx="1.400"/><rect x="4.500" y=".9" width="11.500" height="2.200"/><rect x="4.500" y="5.500" width="11.500" height="2.200"/><rect x="4.500" y="10.100" width="11.500" height="2.200"/></g></svg>
<div class="abs" style="left:529px;top:132px;width:284px;height:32px;background:#fff;border:1px solid #c8c8c8;border-radius:3px"></div>
<div class="t" style="left:543px;top:142.92px;font-size:12.5px;color:#8a8a8a;letter-spacing:-0.1px">Search documentation</div>
<svg style="left:828px;top:139.500px" width="17" height="17" viewBox="0 0 17 17"><rect x=".9" y=".9" width="7.900" height="14.900" rx="1.600" fill="none" stroke="#007960" stroke-width="1.700"/><path d="M8 8.300H3.600M5.700 6L3.400 8.300l2.300 2.300" fill="none" stroke="#007960" stroke-width="1.300"/><path d="M10.800 1H13.500Q15 1 15 2.500V14.200Q15 15.700 13.500 15.700H10.800" fill="none" stroke="#007960" stroke-width="1.600" stroke-dasharray="1.500 1.700"/></svg>
<div class="t" style="left:454.5px;top:182.06px;font-size:16px;color:#007960;letter-spacing:-0.39px">Trigonometry_atan2()</div>
<div class="t" style="left:454.5px;top:211.94px;font-size:12px;color:#2a2a2a;letter-spacing:0.02px">Calculate the angle (in radians) between the positive X axis and the ray</div>
<div class="t" style="left:454.5px;top:230.24px;font-size:12px;color:#2a2a2a;letter-spacing:0.09px">formed by the point ($x, $y).</div>
<div class="t" style="left:454.5px;top:265.1px;font-size:13px;color:#007960;letter-spacing:0.15px">Variations</div>
<div class="t" style="left:454.5px;top:292.14px;font-size:12px;color:#007960;font-weight:bold;letter-spacing:0.14px">Trigonometry_atan2</div>
<div class="t" style="left:576.4px;top:292.14px;font-size:12px;color:#2a2a2a">(</div>
<svg style="left:584.2px;top:288.9px" width="14.5" height="13" viewBox="0 0 14.500 13"><path d="M.6 8.400L2.800 1l2.400 8.700 2.300-4.900 2.700 7.600 3-5 .7 1.600" fill="none" stroke="#3d3d3d" stroke-width="1.5" stroke-linejoin="round" stroke-linecap="round"/></svg>
<div class="t" style="left:601.9px;top:292.14px;font-size:12px;color:#2a2a2a;letter-spacing:-0.72px">y ,</div>
<svg style="left:620.6px;top:288.9px" width="14.5" height="13" viewBox="0 0 14.500 13"><path d="M.6 8.400L2.800 1l2.400 8.700 2.300-4.900 2.700 7.600 3-5 .7 1.600" fill="none" stroke="#3d3d3d" stroke-width="1.5" stroke-linejoin="round" stroke-linecap="round"/></svg>
<div class="t" style="left:636.4px;top:292.14px;font-size:12px;color:#2a2a2a;letter-spacing:-0.3px">x ) :</div>
<svg style="left:659.8px;top:288.9px" width="14.5" height="13" viewBox="0 0 14.500 13"><path d="M.6 8.400L2.800 1l2.400 8.700 2.300-4.900 2.700 7.600 3-5 .7 1.600" fill="none" stroke="#3d3d3d" stroke-width="1.5" stroke-linejoin="round" stroke-linecap="round"/></svg>
<div class="t" style="left:677.2px;top:292.14px;font-size:12px;color:#2a2a2a;letter-spacing:-0.06px">Signal</div>
<svg style="left:821px;top:291px" width="13" height="14" viewBox="0 0 13 14"><path d="M3 2.500V1h9v9.500h-1.500" fill="none" stroke="#333" stroke-width="1.200"/><path d="M.8 3.300h6.500l2.500 2.500v7.400h-9z" fill="#fff" stroke="#333" stroke-width="1.300"/><path d="M7 3.500v2.800h2.800" fill="none" stroke="#333" stroke-width="1"/></svg>
<div class="t" style="left:464.4px;top:310.24px;font-size:12px;color:#2a2a2a;letter-spacing:0.13px">Calculate the arctangent from two signals</div>
<div class="t" style="left:454.5px;top:345.9px;font-size:13px;color:#007960;letter-spacing:-0.09px">Parameters</div>
<div class="t" style="left:454.5px;top:370.67px;font-size:11.5px;color:#007960;font-weight:bold;letter-spacing:-0.71px">x:</div>
<svg style="left:470px;top:367px" width="14.5" height="13" viewBox="0 0 14.500 13"><path d="M.6 8.400L2.800 1l2.400 8.700 2.300-4.900 2.700 7.600 3-5 .7 1.600" fill="none" stroke="#3d3d3d" stroke-width="1.5" stroke-linejoin="round" stroke-linecap="round"/></svg>
<div class="t" style="left:488.4px;top:370.24px;font-size:12px;color:#2a2a2a;letter-spacing:-0.06px">Signal</div>
<svg style="left:847.500px;top:371px" width="7" height="11" viewBox="0 0 7 11"><path d="M1 1l4.500 4.500L1 10" fill="none" stroke="#333" stroke-width="1.400"/></svg>
<div class="t" style="left:454.5px;top:399.87px;font-size:11.5px;color:#007960;font-weight:bold;letter-spacing:-0.71px">y:</div>
<svg style="left:470px;top:396.2px" width="14.5" height="13" viewBox="0 0 14.500 13"><path d="M.6 8.400L2.800 1l2.400 8.700 2.300-4.900 2.700 7.600 3-5 .7 1.600" fill="none" stroke="#3d3d3d" stroke-width="1.5" stroke-linejoin="round" stroke-linecap="round"/></svg>
<div class="t" style="left:488.4px;top:399.44px;font-size:12px;color:#2a2a2a;letter-spacing:-0.06px">Signal</div>
<div class="t" style="left:454.5px;top:434.2px;font-size:13px;color:#007960;letter-spacing:-0.2px">Overview Page</div>
<div class="abs" style="left:462.500px;top:464.500px;width:6px;height:6px;border-radius:3px;background:#222"></div>
<div class="t" style="left:473.9px;top:461.74px;font-size:12px;color:#007960;letter-spacing:0.23px;text-decoration:underline">Additional Trigonometric Functions</div>
<div class="t" style="left:454.5px;top:496.7px;font-size:13px;color:#007960;letter-spacing:0.06px">Package Information</div>
<div class="t" style="left:454.5px;top:524.24px;font-size:12px;color:#2a2a2a;letter-spacing:0.03px">Package Name: Trigonometry</div>
<div class="t" style="left:454.5px;top:542.94px;font-size:12px;color:#2a2a2a;letter-spacing:-0.11px">Document Created At: 2020-08-12T21:49:29.085828400Z</div>
<div class="t" style="left:454.5px;top:561.04px;font-size:12px;color:#2a2a2a;letter-spacing:-0.07px">Document Updated At: 2020-08-12T21:49:29.306238200Z</div>
<div class="abs" style="left:8px;top:665px;width:322px;height:103px;background:#fff;border:1px solid #b3dcd2;border-radius:4px"></div>
<div class="abs" style="left:9px;top:700px;width:320px;height:1px;background:#c9d9d5"></div>
<div class="t" style="left:14.3px;top:669.59px;font-size:13.6px;color:#007960;letter-spacing:0.05px">Derived Data</div>
<div class="t" style="left:14.2px;top:686.06px;font-size:9.5px;color:#8a8a8a;letter-spacing:-0.19px">View data created by tools in a dependency tree</div>
<svg style="left:309px;top:676px" width="12" height="8" viewBox="0 0 12 8"><path d="M1.200 1.200l4.800 4.800 4.800-4.800" fill="none" stroke="#007960" stroke-width="2.300"/></svg>
<svg style="left:18.5px;top:709px" width="14.5" height="13" viewBox="0 0 14.500 13"><path d="M.6 8.400L2.800 1l2.400 8.700 2.300-4.900 2.700 7.600 3-5 .7 1.600" fill="none" stroke="#CE561B" stroke-width="1.8" stroke-linejoin="round" stroke-linecap="round"/></svg>
<div class="t" style="left:37.4px;top:709.94px;font-size:12px;color:#007960;letter-spacing:-0.03px;text-decoration:underline">atan2(y, x)</div>
<svg style="left:20px;top:725px" width="16" height="30" viewBox="0 0 16 30"><path d="M3.500 0v28.500M3.500 9h10.500M3.500 28.500h10.500" fill="none" stroke="#c8c8c8" stroke-width="1"/></svg>
<svg style="left:38.5px;top:727px" width="14.5" height="13" viewBox="0 0 14.500 13"><path d="M.6 8.400L2.800 1l2.400 8.700 2.300-4.900 2.700 7.600 3-5 .7 1.600" fill="none" stroke="#9D248F" stroke-width="1.8" stroke-linejoin="round" stroke-linecap="round"/></svg>
<div class="t" style="left:57.1px;top:729.54px;font-size:12px;color:#007960;text-decoration:underline">x</div>
<svg style="left:38.5px;top:746.3px" width="14.5" height="13" viewBox="0 0 14.500 13"><path d="M.6 8.400L2.800 1l2.400 8.700 2.300-4.900 2.700 7.600 3-5 .7 1.600" fill="none" stroke="#068C45" stroke-width="1.8" stroke-linejoin="round" stroke-linecap="round"/></svg>
<div class="t" style="left:57.1px;top:748.14px;font-size:12px;color:#007960;text-decoration:underline">y</div>
</body>
</html>
